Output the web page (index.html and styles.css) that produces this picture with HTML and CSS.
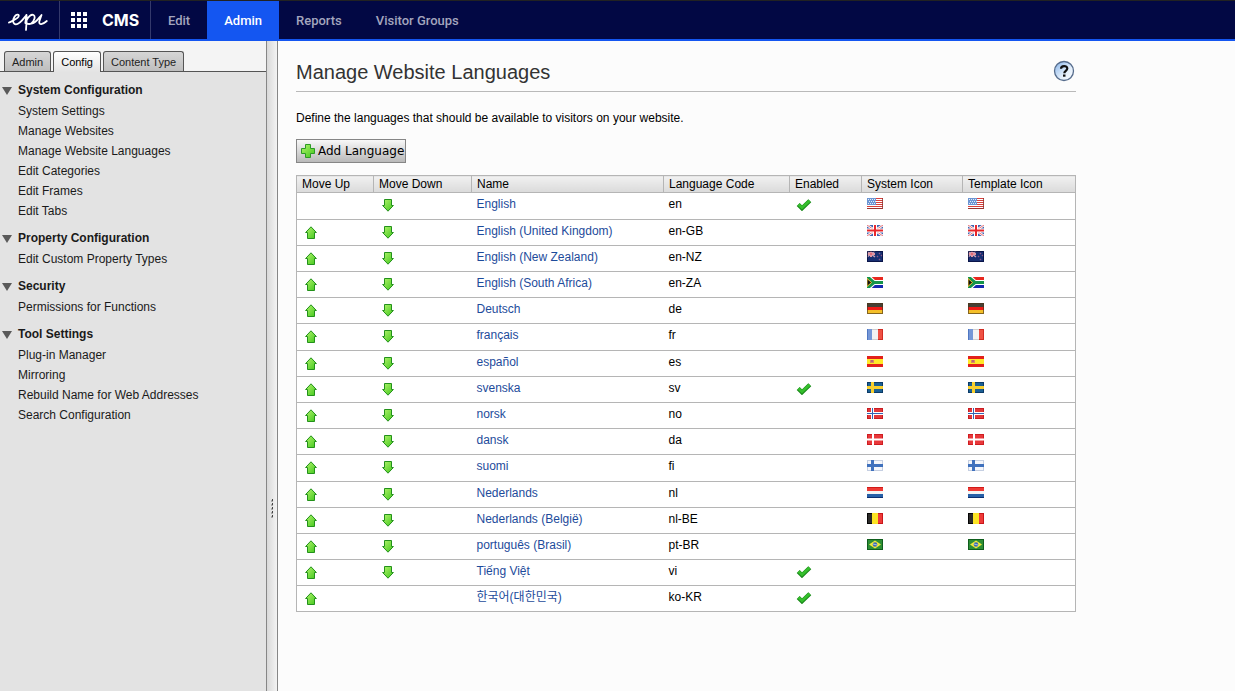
FILE: index.html
```
<!DOCTYPE html>
<html lang="en">
<head>
    <meta charset="UTF-8">
    <meta name="viewport" content="width=device-width, initial-scale=1.0">
    <title>Manage Website Languages</title>
    <link rel="stylesheet" href="styles.css">
</head>
<body>
    <!-- Icon sprite -->
    <svg class="sprite" width="0" height="0" aria-hidden="true">
        <defs>
            <linearGradient id="green" x1="0" y1="0" x2="1" y2="1">
                <stop offset="0" stop-color="#b4f56c"/>
                <stop offset="1" stop-color="#3fc61c"/>
            </linearGradient>
            <linearGradient id="helpFill" x1="0" y1="0" x2="1" y2="1">
                <stop offset="0" stop-color="#86b4ea"/>
                <stop offset="0.6" stop-color="#e4effb"/>
                <stop offset="1" stop-color="#ffffff"/>
            </linearGradient>
        </defs>
        <symbol id="up" viewBox="0 0 12 13">
            <path d="M6 .8 11.400 6.500H9.500v6h-7v-6H.6z" fill="url(#green)" stroke="#23911b"/>
        </symbol>
        <symbol id="down" viewBox="0 0 12 13">
            <path d="M6 12.200 11.400 6.500H9.500v-6h-7v6H.6z" fill="url(#green)" stroke="#23911b"/>
        </symbol>
        <symbol id="check" viewBox="0 0 16 12">
            <path d="M2.200 5.500 6 9.300 13.800 1.800" fill="none" stroke="#1b8a1b" stroke-width="4.200"/>
            <path d="M2.600 5.500 6 8.700 13.500 1.800" fill="none" stroke="#35bf2c" stroke-width="2.800"/>
        </symbol>
        <symbol id="flag-us" viewBox="0 0 16 11">
            <rect width="16" height="11" fill="#fff"/>
            <path d="M0 .5h16M0 2.5h16M0 4.5h16M0 6.5h16M0 8.5h16M0 10.5h16" stroke="#d8403c"/>
            <rect width="9" height="7" fill="#6c95d3"/>
            <path d="M1 1.5h8M2 3.5h7M1 5.5h8" stroke="#e2ecf9" stroke-dasharray="1 1"/>
            <path d="M15.5 0v10.5H0" fill="none" stroke="#8c2f2c" stroke-opacity=".8"/>
        </symbol>
        <symbol id="flag-gb" viewBox="0 0 16 11">
            <rect width="16" height="11" fill="#4362ae"/>
            <path d="M0 0l16 11M16 0L0 11" stroke="#fff" stroke-width="2.400"/>
            <path d="M0 0l16 11M16 0L0 11" stroke="#e34c50" stroke-width=".8"/>
            <path d="M8 0v11M0 5.5h16" stroke="#fff" stroke-width="4"/>
            <path d="M8 0v11M0 5.5h16" stroke="#e8262b" stroke-width="2"/>
        </symbol>
        <symbol id="flag-nz" viewBox="0 0 16 11">
            <rect width="16" height="11" fill="#182f72"/>
            <path d="M0 0l8 6M8 0L0 6" stroke="#c8a1b8" stroke-width="1.5"/>
            <path d="M4 0v6M0 3h8" stroke="#eee" stroke-width="2"/>
            <path d="M4 0v6M0 3h8" stroke="#d64055"/>
            <path d="M12 2h1v1h-1zM10 5h1v1h-1zM14 4h1v1h-1zM12 8h1v1h-1z" fill="#c05472" stroke="#7c5a91" stroke-width=".5"/>
            <rect x=".5" y=".5" width="15" height="10" fill="none" stroke="#060d3c" stroke-opacity=".75"/>
        </symbol>
        <symbol id="flag-za" viewBox="0 0 16 11">
            <rect width="16" height="5" fill="#e8281f"/>
            <rect y="6" width="16" height="5" fill="#1428b0"/>
            <path d="M1 0 7 5.5h9M1 11 7 5.5" fill="none" stroke="#fff" stroke-width="5"/>
            <path d="M0-.5 7 5.5h9M0 11.500 7 5.500" fill="none" stroke="#15954b" stroke-width="3"/>
            <path d="M0 1.500 4.500 5.500 0 9.500z" fill="#111" stroke="#edbf28"/>
        </symbol>
        <symbol id="flag-de" viewBox="0 0 16 11">
            <rect width="16" height="4" fill="#454035"/>
            <rect y="4" width="16" height="3" fill="#ef1b17"/>
            <rect y="7" width="16" height="4" fill="#f4bf28"/>
            <rect x=".5" y=".5" width="15" height="10" fill="none" stroke="#4b3418" stroke-opacity=".65"/>
        </symbol>
        <symbol id="flag-fr" viewBox="0 0 16 11">
            <rect width="16" height="11" fill="#f3f3f3"/>
            <rect width="5" height="11" fill="#7597d7"/>
            <rect x="11" width="5" height="11" fill="#ef5143"/>
            <path d="M5 .5h6M5 10.500h6" stroke="#cfcfcf"/>
            <path d="M.5 0v11" stroke="#4f77c2"/>
            <path d="M15.500 0v11M11 .5h5M11 10.500h5" stroke="#d12c24"/>
        </symbol>
        <symbol id="flag-es" viewBox="0 0 16 11">
            <rect width="16" height="11" fill="#e3201b"/>
            <rect y="3" width="16" height="5" fill="#ffe928"/>
            <path d="M3 4h4v3H3z" fill="#dc8c5c"/>
            <path d="M4 4h2v2H4z" fill="#b96579"/>
        </symbol>
        <symbol id="flag-se" viewBox="0 0 16 11">
            <rect width="16" height="11" fill="#1a5f94"/>
            <rect x=".5" y=".5" width="15" height="10" fill="none" stroke="#0b3a66"/>
            <path d="M5.500 0v11M0 5.500h16" stroke="#f8cf2d" stroke-width="3"/>
        </symbol>
        <symbol id="flag-no" viewBox="0 0 16 11">
            <rect width="16" height="11" fill="#e2383b"/>
            <rect x=".5" y=".5" width="15" height="10" fill="none" stroke="#c91d22"/>
            <path d="M5.500 0v11M0 5.500h16" stroke="#fff" stroke-width="3"/>
            <path d="M5.500 0v11M0 5.500h16" stroke="#3465b4"/>
        </symbol>
        <symbol id="flag-dk" viewBox="0 0 16 11">
            <rect width="16" height="11" fill="#e8383b"/>
            <rect x=".5" y=".5" width="15" height="10" fill="none" stroke="#cf1c20"/>
            <path d="M6 0v11M0 5.500h16" stroke="#fff" stroke-width="2"/>
        </symbol>
        <symbol id="flag-fi" viewBox="0 0 16 11">
            <rect width="16" height="11" fill="#f4f6fb"/>
            <rect x=".5" y=".5" width="15" height="10" fill="none" stroke="#c5cfe2"/>
            <path d="M5.500 0v11M0 5.500h16" stroke="#3f71bd" stroke-width="3"/>
        </symbol>
        <symbol id="flag-nl" viewBox="0 0 16 11">
            <rect width="16" height="11" fill="#f4f4f4"/>
            <rect width="16" height="4" fill="#ee3a35"/>
            <rect y="7" width="16" height="4" fill="#2660a8"/>
            <path d="M0 .5h16" stroke="#d11a18"/>
            <path d="M0 10.500h16" stroke="#0a2f72"/>
        </symbol>
        <symbol id="flag-be" viewBox="0 0 16 11">
            <rect width="16" height="11" fill="#fbe424"/>
            <rect width="5" height="11" fill="#2c2b29"/>
            <rect x="11" width="5" height="11" fill="#ee3a38"/>
            <path d="M.5 0v11M0 .5h5M0 10.500h5" stroke="#050505"/>
            <path d="M15.500 0v11M11 .5h5M11 10.500h5" stroke="#c9161a"/>
        </symbol>
        <symbol id="flag-br" viewBox="0 0 16 11">
            <rect width="16" height="11" fill="#2d8f35"/>
            <rect x=".5" y=".5" width="15" height="10" fill="none" stroke="#0f5d1c"/>
            <path d="M8 1.500 14 5.500 8 9.500 2 5.500z" fill="#f0e83c"/>
            <circle cx="8" cy="5.500" r="2.300" fill="#3a6ab2"/>
            <path d="M6 5l4 1" stroke="#d8e6f5" stroke-width=".7"/>
        </symbol>
    </svg>

    <!-- Global menu -->
    <nav class="top-bar">
        <a href="#" class="logo" aria-label="Epi">
            <svg width="40" height="22" viewBox="0 0 40 22" fill="none" stroke="#fff" stroke-width="1.800" stroke-linecap="round" stroke-linejoin="round">
                <path d="M1 12.500C5 10.500 10.800 8.500 10.800 5.800 10.800 3.800 8 4.200 6.500 6.800 4.300 10.500 4.800 14.300 8 14.300 12 14.300 15.500 8.500 18.500 5L17.300 13 M18.500 5C18.800 9 18.500 14 18 20 M18.500 10.500C20.500 6 23.500 4 25.500 5 27.800 6.300 26.300 11 23.500 13.200 22 14.200 20 14 18.800 13.200 M23.500 13.500C27.500 13.500 30.500 8.500 33.500 5L31.300 11.500C30.800 15.300 34.500 14.800 38.800 11"/>
            </svg>
        </a>
        <a href="#" class="product">
            <svg width="16" height="16" viewBox="0 0 16 16" fill="#fff">
                <path d="M0 0h4v4H0zM6 0h4v4H6zM12 0h4v4h-4zM0 6h4v4H0zM6 6h4v4H6zM12 6h4v4h-4zM0 12h4v4H0zM6 12h4v4H6zM12 12h4v4h-4z"/>
            </svg>
            CMS
        </a>
        <a href="#" class="menu-item">Edit</a>
        <a href="#" class="menu-item active">Admin</a>
        <a href="#" class="menu-item">Reports</a>
        <a href="#" class="menu-item">Visitor Groups</a>
    </nav>

    <div class="layout">
        <!-- Left panel -->
        <aside class="sidebar">
            <div class="tabs" role="tablist">
                <button class="tab" role="tab">Admin</button>
                <button class="tab selected" role="tab" aria-selected="true">Config</button>
                <button class="tab" role="tab">Content Type</button>
            </div>
            <div class="tree">
                <section class="group">
                    <h2>System Configuration</h2>
                    <a href="#">System Settings</a>
                    <a href="#">Manage Websites</a>
                    <a href="#">Manage Website Languages</a>
                    <a href="#">Edit Categories</a>
                    <a href="#">Edit Frames</a>
                    <a href="#">Edit Tabs</a>
                </section>
                <section class="group">
                    <h2>Property Configuration</h2>
                    <a href="#">Edit Custom Property Types</a>
                </section>
                <section class="group">
                    <h2>Security</h2>
                    <a href="#">Permissions for Functions</a>
                </section>
                <section class="group">
                    <h2>Tool Settings</h2>
                    <a href="#">Plug-in Manager</a>
                    <a href="#">Mirroring</a>
                    <a href="#">Rebuild Name for Web Addresses</a>
                    <a href="#">Search Configuration</a>
                </section>
            </div>
        </aside>

        <div class="splitter">
            <svg width="3" height="19" viewBox="0 0 3 19">
                <path d="M0 1h2v2H0zM0 5h2v2H0zM0 9h2v2H0zM0 13h2v2H0zM0 17h2v2H0z" fill="#aaa"/>
                <path d="M1 0h1v2H1zM1 4h1v2H1zM1 8h1v2H1zM1 12h1v2H1zM1 16h1v2H1z" fill="#444"/>
            </svg>
        </div>

        <!-- Content -->
        <main class="content">
            <header class="page-head">
                <h1>Manage Website Languages</h1>
                <button class="help" aria-label="Help">
                    <svg width="22" height="22" viewBox="0 0 22 22">
                        <circle cx="11" cy="11" r="9.500" fill="url(#helpFill)" stroke="#566c8c" stroke-width="1.300"/>
                        <path d="M8 8.800C8 5.200 14.300 5.200 14.300 8.600 14.300 10.800 11.300 10.800 11.300 13.200" fill="none" stroke="#111" stroke-width="2.200"/>
                        <path d="M10 14.500h2.500v2.200H10z" fill="#111"/>
                    </svg>
                </button>
            </header>
            <p class="intro">Define the languages that should be available to visitors on your website.</p>
            <button class="add-button">
                <svg width="14" height="14" viewBox="0 0 14 14">
                    <path d="M4.500.5h5v4h4v5h-4v4h-5v-4h-4v-5h4z" fill="url(#green)" stroke="#2c9a25"/>
                </svg>
                Add Language
            </button>

            <table>
                <colgroup>
                    <col class="col-up">
                    <col class="col-down">
                    <col class="col-name">
                    <col class="col-code">
                    <col class="col-enabled">
                    <col class="col-system">
                    <col class="col-template">
                </colgroup>
                <thead>
                    <tr>
                        <th>Move Up</th>
                        <th>Move Down</th>
                        <th>Name</th>
                        <th>Language Code</th>
                        <th>Enabled</th>
                        <th>System Icon</th>
                        <th>Template Icon</th>
                    </tr>
                </thead>
                <tbody id="languages"></tbody>
            </table>
        </main>
    </div>

    <script>
        // name, code, flag, enabled
        const languages = [
            ["English", "en", "us", true],
            ["English (United Kingdom)", "en-GB", "gb", false],
            ["English (New Zealand)", "en-NZ", "nz", false],
            ["English (South Africa)", "en-ZA", "za", false],
            ["Deutsch", "de", "de", false],
            ["français", "fr", "fr", false],
            ["español", "es", "es", false],
            ["svenska", "sv", "se", true],
            ["norsk", "no", "no", false],
            ["dansk", "da", "dk", false],
            ["suomi", "fi", "fi", false],
            ["Nederlands", "nl", "nl", false],
            ["Nederlands (België)", "nl-BE", "be", false],
            ["português (Brasil)", "pt-BR", "br", false],
            ["Tiếng Việt", "vi", "", true],
            ["한국어(대한민국)", "ko-KR", "", true]
        ];

        function arrow(id, label) {
            return `<button class="move" aria-label="${label}"><svg width="12" height="13"><use href="#${id}"/></svg></button>`;
        }

        function flag(code) {
            return code ? `<svg class="flag" width="16" height="11"><use href="#flag-${code}"/></svg>` : "";
        }

        const body = document.getElementById("languages");
        languages.forEach(([name, code, country, enabled], i) => {
            const row = document.createElement("tr");
            row.innerHTML = `
                <td>${i > 0 ? arrow("up", "Move up") : ""}</td>
                <td>${i < languages.length - 1 ? arrow("down", "Move down") : ""}</td>
                <td><a href="#">${name}</a></td>
                <td>${code}</td>
                <td>${enabled ? '<svg class="check" width="16" height="12"><use href="#check"/></svg>' : ""}</td>
                <td>${flag(country)}</td>
                <td>${flag(country)}</td>
            `;
            body.appendChild(row);
        });
    </script>
</body>
</html>
```
FILE: styles.css
```
* {
    box-sizing: border-box;
}

body {
    margin: 0;
    min-height: 100vh;
    display: flex;
    flex-direction: column;
    font-family: "Liberation Sans", "Noto Sans CJK KR", Arial, sans-serif;
    font-size: 12px;
    color: #000;
    background: #fcfcfc;
}

a {
    text-decoration: none;
}

button {
    font: inherit;
    color: inherit;
    cursor: pointer;
}

svg {
    display: block;
}

.sprite {
    position: absolute;
}

/* Global menu */
.top-bar {
    height: 41px;
    display: flex;
    background: #020844;
    border-top: 1px solid #222;
    border-bottom: 2px solid #1456f1;
    font-family: Roboto, sans-serif;
    font-size: 13px;
    font-weight: 500;
}

.top-bar a {
    display: flex;
    align-items: center;
}

.logo {
    width: 60px;
    padding-left: 8px;
    padding-top: 2px;
    border-right: 1px solid #34396b;
}

.product {
    width: 91px;
    padding-left: 11px;
    gap: 15px;
    border-right: 1px solid #34396b;
    font-family: Inter, sans-serif;
    font-size: 16px;
    font-weight: 700;
    color: #fff;
}

.menu-item {
    padding: 0 17px;
    color: #a3a5be;
}

.menu-item.active {
    background: #1456f1;
    color: #fff;
}

.layout {
    flex: 1;
    display: flex;
}

/* Left panel */
.sidebar {
    width: 267px;
    flex-shrink: 0;
    background: #e3e3e3;
    border-right: 1px solid #868686;
}

.tabs {
    height: 31px;
    padding-left: 4px;
    display: flex;
    align-items: flex-end;
    gap: 2px;
    background: #f4f4f4;
    border-bottom: 1px solid #555;
}

.tab {
    height: 20px;
    padding: 0 7px;
    border: 1px solid #555;
    border-bottom: none;
    border-radius: 3px 3px 0 0;
    background: linear-gradient(#d6d6d6, #bebebe);
    font-size: 11px;
    color: #222;
}

.tab.selected {
    height: 21px;
    margin-bottom: -1px;
    background: linear-gradient(#fff, #e3e3e3);
    color: #000;
}

.tree {
    padding-top: 8px;
}

.group {
    margin-bottom: 7px;
}

.group h2 {
    margin: 0 0 1px;
    display: flex;
    align-items: center;
    font-size: 12px;
    line-height: 20px;
    color: #1a1a1a;
}

.group h2::before {
    content: "";
    margin: 2px 6px 0 2px;
    border: 5px solid transparent;
    border-top: 8px solid #5a5a5a;
    border-bottom: none;
}

.group a {
    display: block;
    padding-left: 18px;
    line-height: 20px;
    color: #1a1a1a;
}

.splitter {
    width: 11px;
    flex-shrink: 0;
    display: flex;
    align-items: flex-start;
    justify-content: center;
    padding-top: 458px;
    background: linear-gradient(to right, #d9d9d9, #f3f3f3);
    border-right: 1px solid #868686;
}

/* Content */
.content {
    flex: 1;
    max-width: 798px;
    padding: 16px 0 24px 18px;
}

.page-head {
    display: flex;
    align-items: center;
    justify-content: space-between;
    height: 35px;
    padding-bottom: 6px;
    border-bottom: 1px solid #b9b9b9;
}

.page-head h1 {
    margin: 2px 0 0;
    font-size: 20px;
    font-weight: 400;
    color: #333;
}

.help {
    padding: 0;
    margin-right: 1px;
    border: none;
    background: none;
}

.intro {
    margin: 16px 0 11px;
    line-height: 20px;
}

.add-button {
    height: 24px;
    padding: 0 1px 0 4px;
    display: flex;
    align-items: center;
    gap: 3px;
    border: 1px solid #868686;
    background: linear-gradient(#f8f8f8, #b9b9b9);
    font-family: "DejaVu Sans", Verdana, sans-serif;
    font-size: 12px;
}

/* Languages table */
table {
    width: 100%;
    margin-top: 12px;
    table-layout: fixed;
    border-collapse: collapse;
    background: #fff;
    border: 1px solid #b5b5b5;
}

.col-up { width: 77px; }
.col-down { width: 98px; }
.col-name { width: 192px; }
.col-code { width: 126px; }
.col-enabled { width: 72px; }
.col-system { width: 101px; }

th {
    height: 17px;
    padding: 0 5px;
    border: 1px solid #b5b5b5;
    background: linear-gradient(#f1f1f1, #dadada);
    font-weight: 400;
    line-height: 16px;
    text-align: left;
}

td {
    height: 26px;
    padding: 3px 5px 0;
    border-bottom: 1px solid #b5b5b5;
    line-height: 16px;
    vertical-align: top;
}

/* every fifth row is a touch taller */
tbody tr:nth-child(5n+1):not(:last-child) td {
    height: 27px;
}

td a {
    color: #1d4b9b;
}

.move {
    display: block;
    margin: 3px 0 0 3px;
    padding: 0;
    border: none;
    background: none;
}

.check {
    margin: 3px 0 0 1px;
}

.flag {
    margin-top: 2px;
}
```
